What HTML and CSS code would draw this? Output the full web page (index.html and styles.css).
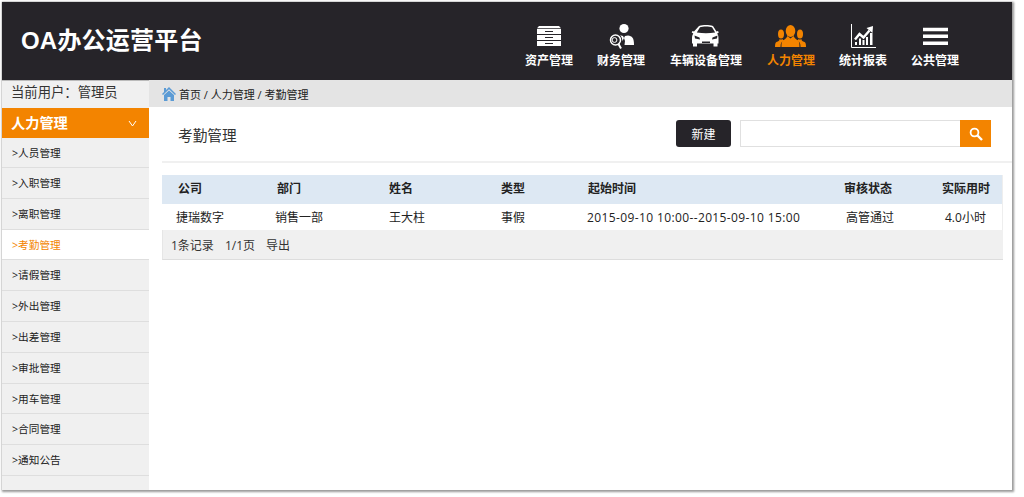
FILE: index.html
```html
<!DOCTYPE html>
<html lang="zh">
<head>
<meta charset="utf-8">
<title>OA办公运营平台</title>
<link rel="stylesheet" href="styles.css">
</head>
<body>
<div class="frame">
  <header class="top">
    <div class="logo">OA办公运营平台</div>
    <nav class="nav">
      <a class="nav-item">
        <svg class="nav-icon" viewBox="0 0 30 26"><path fill="#fff" d="M5 3h20l2 2.300H3z"/><path fill="#fff" fill-rule="evenodd" d="M3 6h24v5H3zM11 8v1h8V8zM3 12h24v5H3zM11 14v1h8v-1zM3 18h24v5H3zM11 20v1h8v-1z"/></svg>
        <span>资产管理</span>
      </a>
      <a class="nav-item">
        <svg class="nav-icon" viewBox="0 0 30 26"><circle cx="18" cy="5.500" r="4.600" fill="#fff"/><path fill="#fff" d="M15 12.500l2 .5 1 2 1-2 3-.5c4 .5 6 2 6 9.500H18.500l.5-4-1-3-1.500 3c-.3-2.500-1-4.500-2.500-6z"/><circle cx="9.500" cy="17" r="5" fill="none" stroke="#fff" stroke-width="1.500"/><circle cx="8.500" cy="17" r="2.400" fill="none" stroke="#fff" stroke-width="1"/><path stroke="#fff" stroke-width="2" d="M12.500 21l2.500 4.500"/></svg>
        <span>财务管理</span>
      </a>
      <a class="nav-item nav-wide">
        <svg class="nav-icon" viewBox="0 0 30 26"><path fill="#fff" fill-rule="evenodd" d="M8 3c4-1.300 10-1.300 14 0l3.500 5.500 1.500-.5.800 1.500-1.600 1c1 1.500 1.300 3 1.300 5v5h-1v3h-4v-3H6v3H2v-3H1v-5c0-2 .3-3.500 1.300-5L.7 9.500 1.500 8 3 8.500zM9 4.300L5.800 9.500c6 1 12.400 1 18.400 0L21 4.300c-3-1-9-1-12 0zM3.500 12.500l.5 3 5 1-.5-2zM26.500 12.500l-.5 3-5 1 .5-2zM11 18.500V20h8v-1.500z"/></svg>
        <span>车辆设备管理</span>
      </a>
      <a class="nav-item is-active">
        <svg class="nav-icon" viewBox="0 0 30 26"><g fill="#f38400"><ellipse cx="14.500" cy="8" rx="4.800" ry="6"/><path d="M11.500 13l3 2.500 3-2.500c1 2.500 3 3.500 4.500 4.300 1 .6 1.500 2 1.500 6.700h-18c0-4.700.5-6 1.500-6.700 1.500-.8 3.500-1.800 4.500-4.300z"/><ellipse cx="5" cy="11" rx="3" ry="4.500"/><path d="M-1 24c0-3 .5-4.500 1.500-5 2-1 2.700-1 3.200-3l1.300.8 1.500-.8c.3.800.6 1.200 1 1.600-2 1-3 2.900-3 6.400z"/><ellipse cx="24" cy="11" rx="3" ry="4.500"/><path d="M30 24c0-3-.5-4.500-1.500-5-2-1-2.700-1-3.200-3l-1.300.8-1.500-.8c-.3.800-.6 1.200-1 1.600 2 1 3 2.900 3 6.400z"/></g></svg>
        <span>人力管理</span>
      </a>
      <a class="nav-item">
        <svg class="nav-icon" viewBox="0 0 30 26"><path fill="none" stroke="#fff" d="M3.500 1v23.500H28"/><path fill="#fff" d="M7 19h2v3H7zM11 15.500h2V22h-2zM14.500 17h2v5h-2zM18 14h2v8h-2zM22 10h2.500v12H22z"/><path fill="none" stroke="#fff" stroke-width="2.400" d="M7 16.500l4.500-5.500 4 3.500 6-7"/><path fill="#fff" d="M18.500 5l6.500-2-.5 7z"/></svg>
        <span>统计报表</span>
      </a>
      <a class="nav-item">
        <svg class="nav-icon" viewBox="0 0 30 26"><path fill="#fff" d="M3 4.700h25v3.500H3zM3 11.500h25V15H3zM3 18.500h25V22H3z"/></svg>
        <span>公共管理</span>
      </a>
    </nav>
  </header>
  <div class="main">
    <aside class="side">
      <div class="user">当前用户：管理员</div>
      <div class="side-title"><span>人力管理</span><svg class="chev" viewBox="0 0 9 7"><path fill="none" stroke="#fff" d="M1 1l3.500 5L8 1"/></svg></div>
      <ul class="menu">
        <li>&gt;人员管理</li>
        <li>&gt;入职管理</li>
        <li>&gt;离职管理</li>
        <li class="current">&gt;考勤管理</li>
        <li>&gt;请假管理</li>
        <li>&gt;外出管理</li>
        <li>&gt;出差管理</li>
        <li>&gt;审批管理</li>
        <li>&gt;用车管理</li>
        <li>&gt;合同管理</li>
        <li>&gt;通知公告</li>
      </ul>
    </aside>
    <section class="content">
      <div class="crumb">
        <svg class="home" viewBox="0 0 14 14"><path fill="#5b9bd5" d="M7 0l7 7-1 1-6-5.700L1 8 0 7l2-2V1h2v2z"/><path fill="#5b9bd5" d="M2 8l5-4.500L12 8v6H8.500v-4h-3v4H2z"/></svg>
        <span>首页 / 人力管理 / 考勤管理</span>
      </div>
      <div class="title-row">
        <h1 class="title">考勤管理</h1>
        <button class="btn-new">新建</button>
        <div class="search">
          <div class="search-input"></div>
          <div class="search-btn"><svg viewBox="0 0 14 14"><circle cx="5.500" cy="5.500" r="3.900" fill="none" stroke="#fff" stroke-width="1.800"/><path stroke="#fff" stroke-width="2.400" d="M8.500 8.500l4.500 4.500"/></svg></div>
        </div>
      </div>
      <div class="table-wrap">
        <table class="grid">
          <colgroup><col class="c1"><col class="c2"><col class="c3"><col class="c4"><col class="c5"><col class="c6"><col class="c7"></colgroup>
          <thead>
            <tr><th class="nudge">公司</th><th class="nudge">部门</th><th>姓名</th><th>类型</th><th class="nudge-s">起始时间</th><th>审核状态</th><th>实际用时</th></tr>
          </thead>
          <tbody>
            <tr><td>捷瑞数字</td><td>销售一部</td><td>王大柱</td><td>事假</td><td class="date">2015-09-10 10:00--2015-09-10 15:00</td><td class="nudge">高管通过</td><td class="nudge">4.0小时</td></tr>
          </tbody>
        </table>
        <div class="pager"><span>1条记录</span><span>1/1页</span><span>导出</span></div>
      </div>
    </section>
  </div>
</div>
</body>
</html>
```
FILE: styles.css
```css
html, body { margin: 0; padding: 0; height: 100%; overflow: hidden; background: #fff; }
body { font-family: "Open Sans", "Noto Sans CJK SC", "Liberation Sans", sans-serif; color: #222; }
.frame {
  margin: 2px 0 0 2px; width: 1010px; height: 488px;
  display: flex; flex-direction: column; background: #fff;
  box-shadow: 0 0 1px #aaa, 1px 1px 2px 1px #999;
}
.top { height: 78px; flex: none; background: #262429; display: flex; align-items: center; justify-content: space-between; }
.logo { margin: 0 0 0 19px; font: bold 24px/30px "Liberation Sans", "Noto Sans CJK SC", sans-serif; color: #fff; letter-spacing: .2px; }
.nav { display: flex; gap: 24px; margin-right: 53px; padding-top: 9px; }
.nav-item { display: flex; flex-direction: column; align-items: center; color: #fff; font-size: 12px; font-weight: 700; line-height: 16px; }
.nav-item.is-active { color: #f38400; }
.nav-wide { margin: 0 1px; }
.nav-icon { width: 30px; height: 26px; margin-bottom: 4px; overflow: visible; }
.main { flex: 1; display: flex; min-height: 0; }
.side { width: 147px; flex: none; background: #f0f0f0; display: flex; flex-direction: column; }
.user { height: 27px; box-sizing: border-box; font-size: 13.33px; line-height: 23px; padding-left: 9px; color: #333; border-top: 1px solid #bbb; }
.side-title { height: 30px; flex: none; box-sizing: border-box; margin-top: 1px; background: #f38400; color: #fff; font-weight: 700; font-size: 14.2px; line-height: 28px; display: flex; align-items: center; justify-content: space-between; padding: 0 12px 0 9px; }
.chev { width: 9px; height: 7px; }
.menu { list-style: none; margin: 0; padding: 0; }
.menu li { height: 30.8px; box-sizing: border-box; border-bottom: 1px solid #dedede; font-size: 10.67px; line-height: 30.5px; padding-left: 10px; color: #222; }
.menu li:first-child { height: 30px; }
.menu li.current { background: #fff; color: #f38400; border-top: 1px solid #dedede; margin-top: -1px; height: 31.8px; }
.content { flex: 1; min-width: 0; background: #fff; display: flex; flex-direction: column; }
.crumb { height: 27px; flex: none; background: #e4e4e4; display: flex; align-items: center; gap: 3px; padding-left: 13px; font-size: 11px; color: #222; }
.home { width: 14px; height: 14px; }
.title-row { height: 55px; flex: none; box-sizing: border-box; margin: 1px 0 0 13px; border-bottom: 2px solid #f0f0f0; display: flex; align-items: flex-start; padding-top: 12px; }
.title { margin: 0 0 0 16px; font-size: 14.67px; font-weight: 400; line-height: 30px; color: #333; flex: 1; }
.btn-new { width: 55px; height: 27px; padding: 0; border: 0; border-radius: 3px; background: #262429; color: #fff; font: 12px "Noto Sans CJK SC", sans-serif; }
.search { display: flex; height: 27px; margin: 0 21px 0 9px; }
.search-input { width: 220px; box-sizing: border-box; border: 1px solid #e0e0e0; border-right: 0; background: #fff; }
.search-btn { width: 31px; background: #f38400; display: flex; align-items: center; justify-content: center; }
.search-btn svg { width: 14px; height: 14px; }
.table-wrap { margin: 12px 9px 0 13px; }
.grid { width: 100%; border-collapse: collapse; table-layout: fixed; font-size: 12px; border-right: 1px solid #eee; }
.c1 { width: 113px; } .c2 { width: 114px; } .c3 { width: 112px; } .c4 { width: 86px; } .c5 { width: 257px; } .c6 { width: 98px; } .c7 { width: auto; }
.grid th { height: 29px; padding: 0 0 3px; box-sizing: border-box; background: #dde8f3; text-align: left; font-weight: 700; color: #222; }
.grid td { height: 26px; padding: 0; color: #222; white-space: nowrap; }
.grid td.date { letter-spacing: .38px; }
.grid th:first-child, .grid td:first-child { padding-left: 14px; }
.grid th.nudge { padding-left: 2px; }
.grid th.nudge-s { padding-left: 1px; }
.grid th:first-child.nudge { padding-left: 16px; }
.grid td.nudge { padding-left: 2px; }
.grid td:last-child { padding-left: 3px; }
.pager { height: 30px; box-sizing: border-box; background: #f0f0f0; border-bottom: 1px solid #ddd; border-left: 1px solid #e6e6e6; display: flex; align-items: center; gap: 11px; padding: 0 0 0 8px; font-size: 12px; color: #333; }
```
